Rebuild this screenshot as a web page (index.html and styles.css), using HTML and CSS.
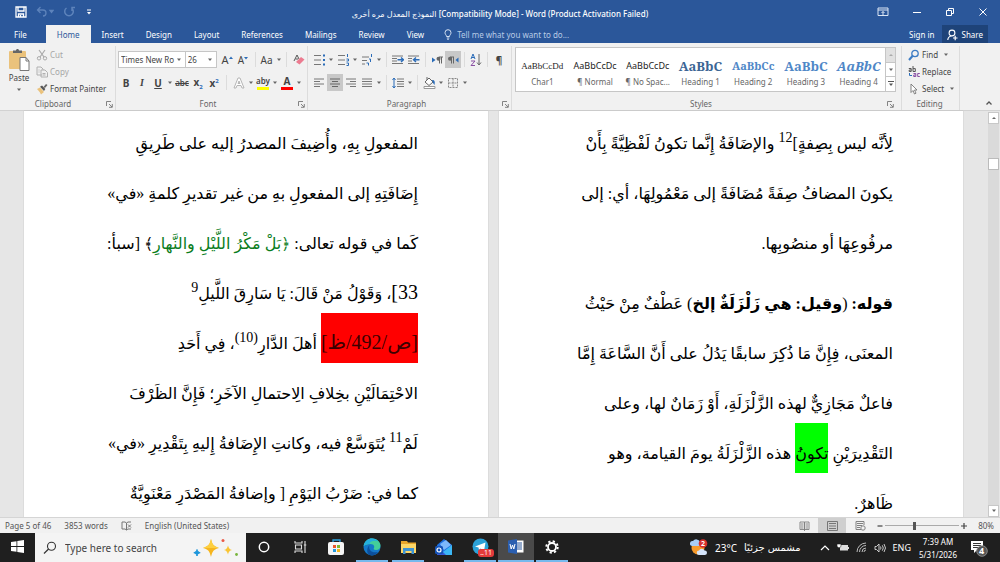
FILE: index.html
```html
<!DOCTYPE html>
<html lang="en">
<head>
<meta charset="utf-8">
<meta name="viewport" content="width=device-width, initial-scale=1">
<title>Word</title>
<link rel="stylesheet" href="styles.css">
</head>
<body>
<svg class="defs" aria-hidden="true">
  <symbol id="caret" viewBox="0 0 6 4"><path d="M1 .5h4L3 3z" fill="#666"/></symbol>
  <symbol id="launch" viewBox="0 0 7 7"><path d="M.5 5V.5H5M3 3l3 3M6.300 3v3.300H3" fill="none" stroke="#777" stroke-width=".9"/></symbol>
</svg>
<div class="app">
  <header class="titlebar">
    <div class="quick">
      <button aria-label="Save"><svg width="12" height="12" viewBox="0 0 12 12"><path d="M1 1h10v10H1zM3 1v4h6V1M3.500 11V8h5v3M5.500 9v2" fill="none" stroke="#fff" stroke-width="1.300"/></svg></button>
      <button aria-label="Undo"><svg width="18" height="12" viewBox="0 0 18 12"><path d="M4.500 1L1.500 4l3 3M1.500 4H7c4 0 4 6 0 6M14 4.500h3l-1.500 2z" fill="none" stroke="#5d83bb" stroke-width="1.300"/></svg></button>
      <button aria-label="Redo"><svg width="12" height="12" viewBox="0 0 12 12"><path d="M3.500 2a4.300 4.300 0 1 0 5 0M9 5V1.500h3" fill="none" stroke="#5d83bb" stroke-width="1.500"/></svg></button>
      <button aria-label="Customize toolbar"><svg width="6" height="8" viewBox="0 0 6 8"><path d="M1 2h4" stroke="#fff"/><path d="M1 4h4L3 6.500z" fill="#fff"/></svg></button>
    </div>
    <h1>النموذج المعدل مره أخرى [Compatibility Mode] - Word (Product Activation Failed)</h1>
    <div class="window-buttons">
      <button aria-label="Ribbon display options"><svg width="12" height="10" viewBox="0 0 12 10"><path d="M1 1h10v7.500H1zM1 3h10M6 8V4.500M4.500 6L6 4.500 7.500 6" fill="none" stroke="#dce6f4"/></svg></button>
      <button aria-label="Minimize"><svg width="10" height="10" viewBox="0 0 10 10"><path d="M1 5.500h8" stroke="#fff"/></svg></button>
      <button aria-label="Restore"><svg width="10" height="10" viewBox="0 0 10 10"><path d="M1.500 3.500h5v5h-5zM3.500 3V1.500h5v5H7" fill="none" stroke="#fff"/></svg></button>
      <button aria-label="Close"><svg width="10" height="10" viewBox="0 0 10 10"><path d="M1.500 1.500l7 7M8.500 1.500l-7 7" stroke="#fff"/></svg></button>
    </div>
  </header>

  <nav class="tabs">
    <button class="file">File</button>
    <button class="active">Home</button>
    <button>Insert</button>
    <button>Design</button>
    <button>Layout</button>
    <button>References</button>
    <button>Mailings</button>
    <button>Review</button>
    <button>View</button>
    <label class="tell"><svg width="8" height="11" viewBox="0 0 8 11"><path d="M2.500 7.500C2.500 6 1 5.500 1 3.700a3 3 0 0 1 6 0c0 1.800-1.500 2.300-1.500 3.800zM2.800 9h2.500M3.200 10.300h1.600" fill="none" stroke="#d5e1f2"/></svg><input type="text" placeholder="Tell me what you want to do..." aria-label="Tell me what you want to do"></label>
    <button class="signin">Sign in</button>
    <button class="share"><svg width="11" height="12" viewBox="0 0 11 12"><circle cx="5" cy="4" r="2.900" fill="none" stroke="#fff" stroke-width="1.100"/><path d="M.8 11C1 8 3 7.200 4.500 7M6 9h4.500M8.200 6.800v4.500" fill="none" stroke="#fff" stroke-width="1.200"/></svg>Share</button>
  </nav>

  <section class="ribbon">
    <div class="group clipboard">
      <div class="body">
        <button class="paste"><svg width="22" height="24" viewBox="0 0 22 24"><rect x="1" y="3" width="17" height="18" rx="1" fill="#eac27c"/><path d="M5 5V2.500h3C8 .5 11 .5 11 2.500h3V5z" fill="#666"/><path d="M12 9.500h6l3 3.500v9.500h-9z" fill="#fff" stroke="#777"/><path d="M18 9.500V13h3" fill="none" stroke="#777"/></svg><span>Paste</span><svg class="caret"><use href="#caret"/></svg></button>
        <div class="stack">
          <button class="off"><svg width="12" height="12" viewBox="0 0 12 12"><path d="M3 1l5 7M9 1L4 8" stroke="#aaa" stroke-width="1.200"/><circle cx="3" cy="9.300" r="1.700" fill="none" stroke="#aaa"/><circle cx="9" cy="9.300" r="1.700" fill="none" stroke="#aaa"/></svg>Cut</button>
          <button class="off"><svg width="12" height="12" viewBox="0 0 12 12"><path d="M6 9H1V1h4l2 2v1M5 4h4l2.500 2.500V11H5zM2.500 4h1M2.500 6h1M6.500 7.500h3M6.500 9h3" fill="none" stroke="#b0b0b0"/></svg>Copy</button>
          <button><svg width="12" height="12" viewBox="0 0 12 12"><path d="M1 6l3-1.500L8 9l-3 2.500C4 9.500 3 8 1 6z" fill="#eac27c"/><path d="M4 3.800L6 2.500 9.300 6 8 8z" fill="#555"/><path d="M7.500 4L10 1l1.500 1L9 5z" fill="#666"/></svg>Format Painter</button>
        </div>
      </div>
      <footer><span>Clipboard</span><svg class="launch"><use href="#launch"/></svg></footer>
    </div>

    <div class="group font">
      <div class="body col">
        <div class="row">
          <div class="combo name"><select aria-label="Font"><option>Times New Ro</option></select><svg class="caret"><use href="#caret"/></svg></div>
          <div class="combo size"><select aria-label="Font size"><option>26</option></select><svg class="caret"><use href="#caret"/></svg></div>
          <button class="t big" aria-label="Grow font">A<svg width="4" height="8" viewBox="0 0 4 8"><path d="M0 3l2-2.500L4 3z" fill="#2b6cb8"/></svg></button>
          <button class="t" aria-label="Shrink font">A<svg width="4" height="8" viewBox="0 0 4 8"><path d="M0 1l2 2.500L4 1z" fill="#2b6cb8"/></svg></button>
          <i class="sep"></i>
          <button class="t wide">Aa<svg class="caret"><use href="#caret"/></svg></button>
          <i class="sep"></i>
          <button aria-label="Clear formatting"><svg width="12" height="12" viewBox="0 0 12 12"><path d="M1 7L4 1l2 4M2.500 5H5" fill="none" stroke="#555"/><path d="M3 8l5-5 3.500 2.500-5 5z" fill="#ec7b90"/></svg></button>
        </div>
        <div class="row">
          <button class="t"><b>B</b></button>
          <button class="t serif"><i>I</i></button>
          <button class="t"><b><u>U</u></b></button>
          <svg class="caret"><use href="#caret"/></svg>
          <button class="t small"><s>abc</s></button>
          <button class="t"><b>x<sub>2</sub></b></button>
          <button class="t"><b>x<sup>2</sup></b></button>
          <i class="sep"></i>
          <button aria-label="Text effects"><svg width="12" height="12" viewBox="0 0 12 12"><path d="M1 11L5 1h2l4 10H9L8 8.500H4L3 11zM5 6.500h2L6 4z" fill="#fff" stroke="#b5b5b5"/></svg></button>
          <svg class="caret"><use href="#caret"/></svg>
          <button class="t small hl" aria-label="Highlight">aby</button>
          <svg class="caret"><use href="#caret"/></svg>
          <button class="t color" aria-label="Font color"><b>A</b></button>
          <svg class="caret"><use href="#caret"/></svg>
        </div>
      </div>
      <footer><span>Font</span><svg class="launch"><use href="#launch"/></svg></footer>
    </div>

    <div class="group paragraph">
      <div class="body col">
        <div class="row">
          <button aria-label="Bullets"><svg width="12" height="12" viewBox="0 0 12 12"><path d="M1 1.500h7M1 6h7M1 10.500h7" stroke="#777"/><path d="M10 .5h2v2h-2zM10 5h2v2h-2zM10 9.500h2v2h-2z" fill="#2b6cb8"/></svg></button>
          <svg class="caret"><use href="#caret"/></svg>
          <button aria-label="Numbering"><svg width="12" height="12" viewBox="0 0 12 12"><path d="M1 1.500h7M1 6h7M1 10.500h7" stroke="#777"/><path d="M10.500 0v3M9.500 5h2v2h-2M9.500 9h2v2.500h-2" fill="none" stroke="#2b6cb8"/></svg></button>
          <svg class="caret"><use href="#caret"/></svg>
          <button aria-label="Multilevel list"><svg width="12" height="12" viewBox="0 0 12 12"><path d="M1 3h7M1 6.500h5M1 10h3" stroke="#777"/><path d="M10.500 0v3M8 5h1.500v3M5.500 9h2v2.500" fill="none" stroke="#2b6cb8"/></svg></button>
          <svg class="caret"><use href="#caret"/></svg>
          <i class="sep"></i>
          <button aria-label="Decrease indent"><svg width="12" height="12" viewBox="0 0 12 12"><path d="M0 2h11M0 4.500h5M0 7h5M0 9.500h11" stroke="#777"/><path d="M5.500 5.800h5.500M9 3.500l2.500 2.300L9 8" fill="none" stroke="#2b6cb8" stroke-width="1.400"/></svg></button>
          <button aria-label="Increase indent"><svg width="12" height="12" viewBox="0 0 12 12"><path d="M0 2h11M0 4.500h4M0 7h4M0 9.500h11" stroke="#777"/><path d="M11.500 5.800H6M8 3.500L5.500 5.800 8 8" fill="none" stroke="#2b6cb8" stroke-width="1.400"/></svg></button>
          <i class="sep"></i>
          <button aria-label="Left-to-right"><svg width="12" height="12" viewBox="0 0 12 12"><path d="M1 3.500v5L4.500 6z" fill="#2b6cb8"/><path d="M8 3h4M8.500 3v6.500M10.500 3v6.500" stroke="#666"/><circle cx="7.500" cy="4.700" r="2" fill="#666"/></svg></button>
          <button class="on" aria-label="Right-to-left"><svg width="12" height="12" viewBox="0 0 12 12"><path d="M11.500 3.500v5L8.500 6z" fill="#2b6cb8"/><path d="M3 3h4M4.500 3v6.500M6.500 3v6.500" stroke="#666"/><circle cx="3" cy="4.700" r="2" fill="#666"/></svg></button>
          <i class="sep"></i>
          <button aria-label="Sort"><svg width="12" height="14" viewBox="0 0 12 14"><path d="M1 6l2-5 2 5M1.700 4.500h2.600" fill="none" stroke="#2b6cb8"/><path d="M1 8h4L1 12.500h4" fill="none" stroke="#8a4fa3"/><path d="M9 1v10.500M7 9.500L9 12l2-2.500" fill="none" stroke="#666"/></svg></button>
          <i class="sep"></i>
          <button class="t" aria-label="Show marks"><b>¶</b></button>
        </div>
        <div class="row">
          <button aria-label="Align left"><svg width="12" height="12" viewBox="0 0 12 12"><path d="M1 2h10M1 4.500h6M1 7h10M1 9.500h6" stroke="#777"/></svg></button>
          <button class="on" aria-label="Center"><svg width="12" height="12" viewBox="0 0 12 12"><path d="M1 2h10M3 4.500h6M1 7h10M3 9.500h6" stroke="#666"/></svg></button>
          <button aria-label="Align right"><svg width="12" height="12" viewBox="0 0 12 12"><path d="M1 2h10M5 4.500h6M1 7h10M5 9.500h6" stroke="#777"/></svg></button>
          <button aria-label="Justify"><svg width="12" height="12" viewBox="0 0 12 12"><path d="M1 2h10M1 4.500h10M1 7h10M1 9.500h10" stroke="#777"/></svg></button>
          <svg class="caret"><use href="#caret"/></svg>
          <i class="sep"></i>
          <button aria-label="Line spacing"><svg width="12" height="12" viewBox="0 0 12 12"><path d="M5 2h7M5 4.500h7M5 7h7M5 9.500h7" stroke="#777"/><path d="M2 1v10M.5 3L2 1l1.500 2M.5 9L2 11l1.500-2" fill="none" stroke="#2b6cb8"/></svg></button>
          <svg class="caret"><use href="#caret"/></svg>
          <i class="sep"></i>
          <button aria-label="Shading"><svg width="13" height="12" viewBox="0 0 13 12"><path d="M2 5l4-4 4 4-4 3.500zM4 3V0" fill="#fff" stroke="#666"/><path d="M9 3c3 0 3 2 2.500 5L10 6z" fill="#2b6cb8"/><path d="M1 9.500h11v2H1z" fill="#fff" stroke="#999"/></svg></button>
          <svg class="caret"><use href="#caret"/></svg>
          <button aria-label="Borders"><svg width="12" height="12" viewBox="0 0 12 12"><path d="M1.500 1.500h9v9h-9zM6 1.500v9M1.500 6h9" fill="none" stroke="#888" stroke-dasharray="2 1"/></svg></button>
          <svg class="caret"><use href="#caret"/></svg>
        </div>
      </div>
      <footer><span>Paragraph</span><svg class="launch"><use href="#launch"/></svg></footer>
    </div>

    <div class="group styles">
      <div class="gallery">
        <button><span class="sample char">AaBbCcDd</span><span>Char1</span></button>
        <button><span class="sample">AaBbCcDc</span><span>¶ Normal</span></button>
        <button><span class="sample">AaBbCcDc</span><span>¶ No Spac...</span></button>
        <button><span class="sample h1">AaBbC</span><span>Heading 1</span></button>
        <button><span class="sample h2">AaBbCc</span><span>Heading 2</span></button>
        <button><span class="sample h3">AaBbC</span><span>Heading 3</span></button>
        <button><span class="sample h4">AaBbC</span><span>Heading 4</span></button>
        <div class="steps">
          <button class="dim" aria-label="Previous styles"><svg width="6" height="4" viewBox="0 0 6 4"><path d="M1 3h4L3 1z" fill="#aaa"/></svg></button>
          <button aria-label="Next styles"><svg class="caret"><use href="#caret"/></svg></button>
          <button aria-label="More styles"><svg width="6" height="6" viewBox="0 0 6 6"><path d="M0 .5h6" stroke="#555"/><path d="M1 2.500h4L3 5z" fill="#555"/></svg></button>
        </div>
      </div>
      <footer><span>Styles</span><svg class="launch"><use href="#launch"/></svg></footer>
    </div>

    <div class="group editing">
      <div class="body">
        <div class="stack">
          <button><svg width="12" height="12" viewBox="0 0 12 12"><circle cx="7" cy="4.500" r="3.200" fill="none" stroke="#3d7cc4" stroke-width="1.300"/><path d="M4.500 7L1 11" stroke="#3d7cc4" stroke-width="2"/></svg>Find<svg class="caret"><use href="#caret"/></svg></button>
          <button><svg width="12" height="12" viewBox="0 0 12 12"><path d="M.8 2.500h2.400V5.500H1.200V4h2M5 0v5.500h2.300V2.600H5" fill="none" stroke="#555"/><path d="M5.500 7.500h2.300v3H5.700V9h2M11.800 7.500H9.700v3h2.100" fill="none" stroke="#8a4fa3"/><path d="M1.500 7v2.500h2.500" fill="none" stroke="#2b6cb8"/></svg>Replace</button>
          <button><svg width="12" height="12" viewBox="0 0 12 12"><path d="M3 1v8.500l2-2 1.500 3.500 1.500-.8L6.500 7H9z" fill="#fff" stroke="#777" stroke-width=".9"/></svg>Select<svg class="caret"><use href="#caret"/></svg></button>
        </div>
      </div>
      <footer><span>Editing</span></footer>
    </div>
    <button class="collapse" aria-label="Collapse the ribbon"><svg width="8" height="6" viewBox="0 0 8 6"><path d="M1.500 4.500L4 2l2.500 2.500" fill="none" stroke="#555" stroke-width="1.300"/></svg></button>
  </section>

  <main class="desk">
    <article class="page" lang="ar" dir="rtl">
      <p><span class="line">المفعولِ بِهِ، وأُضِيفَ المصدرُ إليه على طَرِيقِ</span>
      <span class="line">إِضَافَتِهِ إلى المفعولِ بهِ من غير تقديرِ كلمةِ «في»</span>
      <span class="line">كَما في قوله تعالى: <span class="verse">﴿بَلْ مَكْرُ اللَّيْلِ والنَّهارِ</span>﴾ [سبأ:</span>
      <span class="line"><span class="num">33]</span>، وَقَوْلُ مَنْ قَالَ: يَا سَارِقَ اللَّيلِ<sup>9</sup></span>
      <span class="line"><mark class="red"><span class="num">[ص/492/ظ]</span></mark> أهلَ الدَّارِ<sup>(10)</sup>، فِي أَحَدِ</span>
      <span class="line">الاحْتِمَالَيْنِ بخِلافِ الِاحتمالِ الآخَرِ؛ فَإِنَّ الظَرْفَ</span>
      <span class="line">لَمْ<sup>11</sup> يُتَوَسَّعْ فيه، وكانتِ الإِضَافةُ إِليهِ بِتَقْدِيرِ «في»</span>
      <span class="line">كما في: ضَرْبُ اليَوْمِ [ وإضافةُ المَصْدَرِ مَعْنَوِيَّةٌ</span></p>
    </article>
    <article class="page" lang="ar" dir="rtl">
      <p><span class="line">لِأنَّه ليس بِصِفةٍ]<sup>12</sup> والإضَافَةُ إِنَّما تكونُ لَفْظِيَّةً بِأَنْ</span>
      <span class="line">يكونَ المضافُ صِفَةً مُضَافَةً إلى مَعْمُولِهَا، أي: إلى</span>
      <span class="line">مرفُوعِهَا أو منصُوبِها.</span></p>
      <p><span class="line"><b>قوله:</b> (<b>وقيل: هي زَلْزَلَةٌ إلخ</b>) عَطْفٌ مِنْ حَيْثُ</span>
      <span class="line">المعنَى، فِإِنَّ مَا ذُكِرَ سابقًا يَدُلُ على أَنَّ السَّاعَةَ إِمَّا</span>
      <span class="line">فاعلٌ مَجَازِيٌّ لهذه الزَّلْزَلَةِ، أَوْ زَمَانٌ لها، وعلى</span>
      <span class="line">التَقْدِيرَيْنِ <mark class="green">تكونُ</mark> هذه الزَّلْزَلَةُ يومَ القيامة، وهو</span>
      <span class="line">ظَاهرٌ.</span></p>
    </article>
    <div class="scroll">
      <button aria-label="Scroll up"><svg width="6" height="4" viewBox="0 0 6 4"><path d="M1 3h4L3 1z" fill="#666"/></svg></button>
      <div class="track"><div class="thumb"></div></div>
      <button aria-label="Scroll down"><svg class="caret"><use href="#caret"/></svg></button>
    </div>
  </main>

  <footer class="status">
    <span>Page 5 of 46</span>
    <span>3853 words</span>
    <svg width="11" height="10" viewBox="0 0 11 10"><path d="M1 1h3l1.500 1v7L4 8H1zM5.500 9L7 8h3M5.500 2L7 1h3M7 3.500l3 3M10 3.500l-3 3" fill="none" stroke="#777"/></svg>
    <span>English (United States)</span>
    <div class="views">
      <button aria-label="Read mode"><svg width="11" height="10" viewBox="0 0 11 10"><path d="M1 1h4.500v7.500H1zM5.500 1H10v7.500H5.500zM2 3h2.500M2 5h2.500M2 7h2.500M6.500 3H9M6.500 5H9M6.500 7H9M5.500 8v2" fill="none" stroke="#808080" stroke-width=".9"/></svg></button>
      <button class="on" aria-label="Print layout"><svg width="11" height="10" viewBox="0 0 11 10"><path d="M.5.500h10v9H.5zM2 2.500h7M2 5h7M2 7.500h7" fill="none" stroke="#777"/></svg></button>
      <button aria-label="Web layout"><svg width="11" height="10" viewBox="0 0 11 10"><path d="M6 8.500H1v-8h8V4M2 2.500h6M2 4.500h5M2 6.500h3" fill="none" stroke="#808080"/><circle cx="8" cy="7" r="2.200" fill="none" stroke="#808080"/></svg></button>
    </div>
    <div class="zoomer">
      <button aria-label="Zoom out"><svg width="6" height="6" viewBox="0 0 6 6"><path d="M.5 3h5" stroke="#444" stroke-width="1.200"/></svg></button>
      <input type="range" min="10" max="190" value="80" aria-label="Zoom">
      <button aria-label="Zoom in"><svg width="6" height="6" viewBox="0 0 6 6"><path d="M0 3h6M3 0v6" stroke="#444" stroke-width="1.200"/></svg></button>
      <span>80%</span>
    </div>
  </footer>

  <footer class="taskbar">
    <button class="app-icon" aria-label="Start"><svg width="13" height="13" viewBox="0 0 13 13"><path d="M0 2l5.500-.8V6H0zM6.300 1L13 0v6H6.300zM0 6.900h5.500v4.900L0 11zM6.300 6.900H13V13l-6.700-1z" fill="#fff"/></svg></button>
    <label class="search"><svg width="14" height="14" viewBox="0 0 14 14"><circle cx="8.500" cy="5.200" r="4" fill="none" stroke="#333" stroke-width="1.100"/><path d="M5.600 8L1 12.500" stroke="#333" stroke-width="1.200"/></svg><input type="text" placeholder="Type here to search" aria-label="Type here to search">
      <svg width="46" height="20" viewBox="0 0 46 20"><path d="M18 1c1.500 6 2.500 7 8 9-5.500 1.500-6.500 3-8 9-1.500-6-2.500-7.500-8-9 5.500-2 6.500-3 8-9z" fill="#f6b51d"/><path d="M18 1c1.500 6 2.500 7 8 9H10c5.500-2 6.500-3 8-9z" fill="#fdcf3f"/><path d="M35 7.500c.8 3 1.500 3.800 4 4.500-2.500.8-3.200 1.500-4 4.500-.8-3-1.500-3.700-4-4.500 2.500-.7 3.200-1.500 4-4.500z" fill="#f9c535"/><path d="M4 11.500c.6 2 1.200 2.600 3.200 3.200C5.200 15.300 4.600 16 4 18c-.6-2-1.200-2.700-3.200-3.300 2-.6 2.600-1.200 3.200-3.200z" fill="#1d96db" stroke="#1d96db"/><circle cx="30" cy="2.500" r="1.500" fill="#ea5a47"/><circle cx="43.500" cy="16.500" r="1.400" fill="#77b43c"/></svg></label>
    <div class="apps">
      <button class="app-icon" aria-label="Cortana"><svg width="12" height="12" viewBox="0 0 12 12"><circle cx="6" cy="6" r="4.700" fill="none" stroke="#fff" stroke-width="1.500"/></svg></button>
      <button class="app-icon" aria-label="Task view"><svg width="13" height="12" viewBox="0 0 13 12"><path d="M1 0v2h7V0M1 12v-2h7v2M1.500 4h6v4h-6zM11 0v12M9.800 4h2.500" fill="none" stroke="#ddd" stroke-width="1.100"/></svg></button>
      <button class="app-icon" aria-label="Store"><svg width="18" height="18" viewBox="0 0 18 18"><path d="M6 5V2h7v3" fill="none" stroke="#2ba4e0" stroke-width="1.300"/><rect x="1" y="4" width="16" height="13" rx="2" fill="#f5f5f5"/><path d="M6 7h3v3H6z" fill="#e9562c"/><path d="M10 7h3v3h-3z" fill="#7eb92f"/><path d="M6 11h3v3H6z" fill="#2398dc"/><path d="M10 11h3v3h-3z" fill="#f3b61f"/></svg></button>
      <button class="app-icon run" aria-label="Edge"><svg width="18" height="18" viewBox="0 0 18 18"><circle cx="9" cy="9" r="8.500" fill="#1478c9"/><path d="M.7 8C1.500 3 5 .5 9 .5c5 0 8.500 3.500 8.500 7 0 3-2 4.500-4.500 4.500-2 0-3-1-2-2 .5-1 .5-4-3.500-4C4 6 1.500 7 .7 8z" fill="#43cf9a"/><path d="M.7 8C1.500 3 5 .5 9 .5c3 0 5.500 1.500 6.500 3C12 2 7 3 6.500 6 4 5.500 1.500 7 .7 8z" fill="#25aede"/><path d="M6.500 7C5 12 9 15.500 15 14c-2 3-5.500 4-8.500 3C3 15 4 9 6.500 7z" fill="#0c4f9c"/></svg></button>
      <button class="app-icon run" aria-label="File Explorer"><svg width="17" height="16" viewBox="0 0 17 16"><path d="M1 2h6l1 1.500h8V14H1z" fill="#e9a72c"/><path d="M1 5h15v9H1z" fill="#fcd667"/><path d="M3 15V9h11v6h-2.500v-3h-6v3z" fill="#3e93d3"/></svg></button>
      <button class="app-icon" aria-label="Outlook"><svg width="18" height="18" viewBox="0 0 18 18"><path d="M2 7l7-6 8 6v10H2z" fill="#1c6fe0"/><path d="M5 6l6-4 5 5-7 5z" fill="#7db8fa"/><path d="M17 7v10H4z" fill="#3cb7f5"/><path d="M2 8l9 9H2z" fill="#3759d9"/><rect x="0" y="8" width="8" height="8" rx="1.500" fill="#1553b5"/><circle cx="4" cy="12" r="2" fill="none" stroke="#fff" stroke-width="1.200"/></svg></button>
      <button class="app-icon run telegram" aria-label="Telegram"><svg width="17" height="17" viewBox="0 0 17 17"><circle cx="8.500" cy="8.500" r="8" fill="#2ba1d8"/><path d="M3 8.500l10.500-4L12 13 8.500 10.500 7 12l-.5-2.500z" fill="#fff"/></svg><span class="badge">..11</span></button>
      <button class="app-icon run current" aria-label="Word"><svg width="16" height="15" viewBox="0 0 16 15"><path d="M8 1.500h7.500v12H8z" fill="#fff"/><path d="M9 4h5M9 6h5M9 8h5M9 10h5" stroke="#2b579a"/><path d="M0 1.500L9 0v15l-9-1.500z" fill="#2b5fb0"/><path d="M2 5l1.200 5L4.500 6l1.300 4L7 5" fill="none" stroke="#fff"/></svg></button>
      <button class="app-icon run" aria-label="Settings"><svg width="14" height="14" viewBox="0 0 14 14"><circle cx="7" cy="7" r="4" fill="none" stroke="#fff" stroke-width="1.800"/><circle cx="7" cy="7" r="5.700" fill="none" stroke="#fff" stroke-width="2" stroke-dasharray="2.200 2.277"/></svg></button>
    </div>
    <div class="tray">
      <button class="weather"><svg width="18" height="17" viewBox="0 0 18 17"><circle cx="8" cy="9" r="6.500" fill="#f79a2b"/><path d="M2 7a2.500 2.500 0 0 1 1-5 4 4 0 0 1 7 1c2 1 1 4-1 4z" fill="#a9cdf5"/><path d="M9 16a2.200 2.200 0 0 1 0-4.500 3 3 0 0 1 5.500 0A2.200 2.200 0 0 1 15 16z" fill="#d5e5fb"/><circle cx="13" cy="4.500" r="4.300" fill="#d9302c"/><text x="11" y="7" class="count">2</text></svg><span>23°C</span><span lang="ar" class="cond">مشمس جزئيًا</span></button>
      <button aria-label="Hidden icons"><svg width="10" height="8" viewBox="0 0 10 8"><path d="M1 6l4-4 4 4" fill="none" stroke="#fff" stroke-width="1.200"/></svg></button>
      <button aria-label="Battery"><svg width="12" height="9" viewBox="0 0 12 9"><path d="M3 2h8v5.500H3zM11 4h1v2h-1z" fill="#ddd"/><path d="M0 1h4v2.500L2 5 0 3.500z" fill="#fff" stroke="#1f1f1f" stroke-width=".6"/></svg></button>
      <button aria-label="Network"><svg width="11" height="11" viewBox="0 0 11 11"><path d="M1 10A9 9 0 0 1 10 1M3.500 10A6.500 6.500 0 0 1 10 3.500M6 10a4 4 0 0 1 4-4M8 10a2 2 0 0 1 2-2" fill="none" stroke="#bbb"/></svg></button>
      <button aria-label="Volume"><svg width="12" height="10" viewBox="0 0 12 10"><path d="M1 3.500h1.500L5 1v8L2.500 6.500H1zM6.500 3.500q1 1.500 0 3M8.300 2.300q2 2.700 0 5.400M10 1q3 4 0 8" fill="none" stroke="#ddd" stroke-width=".9"/></svg></button>
      <button class="lang">ENG</button>
      <button class="clock"><time>7:39 AM</time><time>5/31/2026</time></button>
      <button aria-label="Notifications"><svg width="20" height="18" viewBox="0 0 20 18"><path d="M2 2h12v9H8l-3 3v-3H2z" fill="#fff"/><path d="M4 4.500h8M4 6.500h8M4 8.500h5" stroke="#1f1f1f" stroke-width=".9"/><circle cx="13" cy="12" r="5.300" fill="#555" stroke="#999" stroke-width=".8"/><text x="10" y="15" class="unread">4</text></svg></button>
    </div>
  </footer>
</div>
</body>
</html>
```
FILE: styles.css
```css
* { box-sizing: border-box; }
body {
  margin: 0;
  font: 8px/12px "Noto Sans", "Open Sans", "DejaVu Sans", sans-serif;
  color: #444;
}
button, input, select { font: inherit; color: inherit; background: none; border: 0; padding: 0; margin: 0; }
button { display: flex; align-items: center; justify-content: center; flex: none; white-space: nowrap; }
input:focus { outline: none; }
svg { display: block; flex: none; }
.defs { position: absolute; width: 0; height: 0; }
.caret { width: 6px; height: 4px; }
.launch { width: 7px; height: 7px; }

.app { display: flex; flex-direction: column; height: 100vh; overflow: hidden; }

/* Title bar and tabs */
.titlebar { display: grid; grid-template-columns: 1fr auto 1fr; align-items: center; height: 24px; background: #2b579a; color: #fff; }
.quick { display: flex; align-items: center; gap: 9px; padding-left: 15px; }
.quick button:last-child { margin-left: 2px; }
.titlebar h1 { margin: 0; padding-top: 3px; font-size: 8px; font-weight: 500; }
.window-buttons { display: flex; justify-content: flex-end; gap: 23px; padding-right: 12px; }

.tabs { display: flex; align-items: stretch; height: 19px; background: #2b579a; color: #fff; flex: none; }
.tabs button { padding: 2px 11px 0; }
.tabs .file { padding: 2px 19px 0 14px; }
.tabs .active { background: #f1f1f1; color: #2b579a; margin-top: 1px; }
.tell { display: flex; align-items: center; gap: 5px; flex: 1; min-width: 0; padding: 2px 0 0 9px; }
.tell input { flex: 1; min-width: 0; }
.tell input::placeholder { color: #b8cbe6; opacity: 1; }
.tabs .signin { padding: 2px 7px 0; }
.tabs .share { gap: 4px; margin: 1px 12px 0 0; padding: 1px 5px 0; background: #1e4379; }

/* Ribbon */
.ribbon { display: flex; flex: none; height: 68px; padding-top: 3px; background: #f1f1f1; border-bottom: 1px solid #d2d2d2; }
.group { display: flex; flex-direction: column; flex: none; border-right: 1px solid #dcdcdc; }
.group .body { display: flex; flex: 1; }
.group .col { flex-direction: column; gap: 6px; padding-top: 5px; }
.group footer { display: flex; align-items: center; height: 12px; padding-right: 2px; color: #666; }
.group footer span { flex: 1; text-align: center; }
.row { display: flex; align-items: center; height: 17px; }
.row button { width: 16px; height: 17px; }
.row > .caret { margin: 0 1px; }
.row .on { background: #c8c8c8; }
.sep { width: 1px; height: 15px; margin: 0 3px; background: #dcdcdc; }
.stack { display: flex; flex-direction: column; }
.stack button { height: 17px; gap: 2px; justify-content: flex-start; }
.stack .off { color: #a6a6a6; }

.clipboard { width: 116px; }
.clipboard .body { padding-left: 8px; gap: 6px; }
.paste { flex-direction: column; justify-content: flex-start; width: 22px; padding-top: 2px; }
.paste .caret { margin-top: 4px; }

.font { width: 192px; padding-left: 2px; }
.font .sep { margin: 0 4px; }
.combo { display: flex; align-items: center; height: 17px; padding: 0 3px 0 2px; background: #fff; border: 1px solid #c6c6c6; }
.combo select { appearance: none; flex: 1; min-width: 0; }
.name { width: 69px; }
.size { width: 32px; border-left: 0; margin-right: 2px; }
.row .t { font-size: 10px; }
.row .big { font-size: 11px; }
.row .wide { width: 22px; gap: 3px; }
.row .small { font-size: 8px; font-weight: 600; }
.serif { font-family: "Liberation Serif", serif; font-weight: 700; }
.row sub, .row sup { font-size: 6px; line-height: 6px; color: #2b6cb8; }
.row .hl, .row .color { width: 12px; height: 14px; margin: 0 2px; border-bottom: 3px solid #ff0; }
.row .color { border-color: #f00; }

.paragraph { width: 204px; padding-left: 3px; }

.styles { flex: 1; min-width: 0; padding: 0 5px 0 3px; }
.gallery { display: flex; height: 45px; flex: none; margin-top: 1px; background: #fff; border: 1px solid #c6c6c6; }
.gallery > button { flex: 1 1 0; min-width: 0; flex-direction: column; align-items: center; justify-content: flex-end; padding: 0 4px 3px; color: #666; }
.gallery .sample { width: 100%; height: 20px; overflow: hidden; font-size: 9px; line-height: 20px; color: #222; }
.gallery .char { font-family: "Liberation Serif", serif; }
.gallery .h1, .gallery .h2, .gallery .h3, .gallery .h4 { font-family: "Noto Serif", "DejaVu Serif", serif; font-weight: 700; color: #4f87c7; }
.gallery .h1 { font-size: 13px; color: #3b6594; }
.gallery .h2 { font-size: 11px; }
.gallery .h3 { font-size: 13px; }
.gallery .h4 { font-size: 13px; font-style: italic; }
.styles footer { margin-top: auto; }
.steps { display: flex; flex-direction: column; width: 10px; border-left: 1px solid #c6c6c6; }
.steps button { flex: 1; border-bottom: 1px solid #c6c6c6; }
.steps button:last-child { border-bottom: 0; }
.steps .dim { background: #e1e1e1; }

.editing { width: 58px; }
.editing .body { padding-left: 6px; }
.editing .stack .caret { margin-left: 3px; }
.collapse { width: 40px; align-self: flex-end; height: 14px; padding-left: 17px; }

/* Document */
.desk { display: flex; flex: 1; min-height: 0; gap: 11px; padding-left: 24px; background: #e6e6e6; }
.page { flex: 1 1 0; min-width: 0; overflow: hidden; padding: 2px 70px 0 24px; background: #fff; color: #000; font: 16px/62px "Liberation Serif", "DejaVu Sans", serif; box-shadow: 0 0 1px #aaa; }
.page p { margin: 0 0 10px; }
.line { display: block; white-space: nowrap; height: 50px; }
.page .num { font-size: 20px; line-height: 20px; }
.page sup { font-size: 14px; line-height: 14px; vertical-align: 7px; }
.verse { color: #0a7d1c; }
mark { display: inline-block; height: 50px; vertical-align: top; color: inherit; }
.red { background: #f00; color: #3b0000; }
.green { background: #0f0; }
.scroll { display: flex; flex-direction: column; width: 12px; margin-left: 14px; padding: 1px 1px 0 0; }
.scroll button { height: 12px; background: #fff; border: 1px solid #c8c8c8; }
.track { flex: 1; padding-top: 34px; background: #dadada; }
.thumb { height: 12px; background: #fff; border: 1px solid #bbb; }

/* Status bar */
.status { display: flex; align-items: center; flex: none; height: 16px; padding: 0 6px 0 5px; background: #f1f1f1; border-top: 1px solid #d5d5d5; color: #555; }
.status > span, .status > svg { margin-right: 13px; }
.views { display: flex; margin-left: auto; height: 15px; }
.views button { width: 28px; }
.views .on { background: #cfcfcf; }
.zoomer { display: flex; align-items: center; gap: 2px; padding-left: 3px; }
.zoomer span { margin-left: 9px; }
.zoomer input { appearance: none; width: 74px; height: 10px; background: linear-gradient(#aaa, #aaa) center / 100% 1px no-repeat; }
.zoomer input::-webkit-slider-thumb { appearance: none; width: 3px; height: 8px; background: #555; }

/* Taskbar */
.taskbar { display: flex; align-items: stretch; flex: none; height: 29px; background: #1f1f1f; color: #fff; }
.app-icon { width: 36px; border-bottom: 2px solid transparent; }
.taskbar > .app-icon { width: 35px; }
.search { display: flex; align-items: center; gap: 8px; width: 211px; padding: 0 7px 0 8px; background: #f4f4f4; color: #333; }
.search input { flex: 1; min-width: 0; font-size: 10px; line-height: 16px; }
.search input::placeholder { color: #444; opacity: 1; }
.apps { display: flex; }
.run { border-image: linear-gradient(90deg, transparent 10%, #76b9ed 10%, #76b9ed 90%, transparent 90%) 2; }
.current { background: #4a4a4a; border-image: none; border-bottom-color: #76b9ed; }
.telegram { position: relative; }
.badge { position: absolute; right: 4px; bottom: 3px; padding: 0 2px; border-radius: 3px; background: #e33b3b; font-size: 7px; line-height: 8px; }
.tray { display: flex; align-items: stretch; margin-left: auto; gap: 7px; padding-right: 11px; }
.weather { gap: 7px; margin-right: 12px; font-size: 10px; }
.cond { font-family: "DejaVu Sans", sans-serif; }
.count { font: 700 7px "Noto Sans", sans-serif; fill: #fff; }
.unread { font: 700 9px "Noto Sans", sans-serif; fill: #fff; }
.lang { font-size: 9px; }
.clock { flex-direction: column; margin: 0 5px 0 1px; line-height: 13px; }
```
